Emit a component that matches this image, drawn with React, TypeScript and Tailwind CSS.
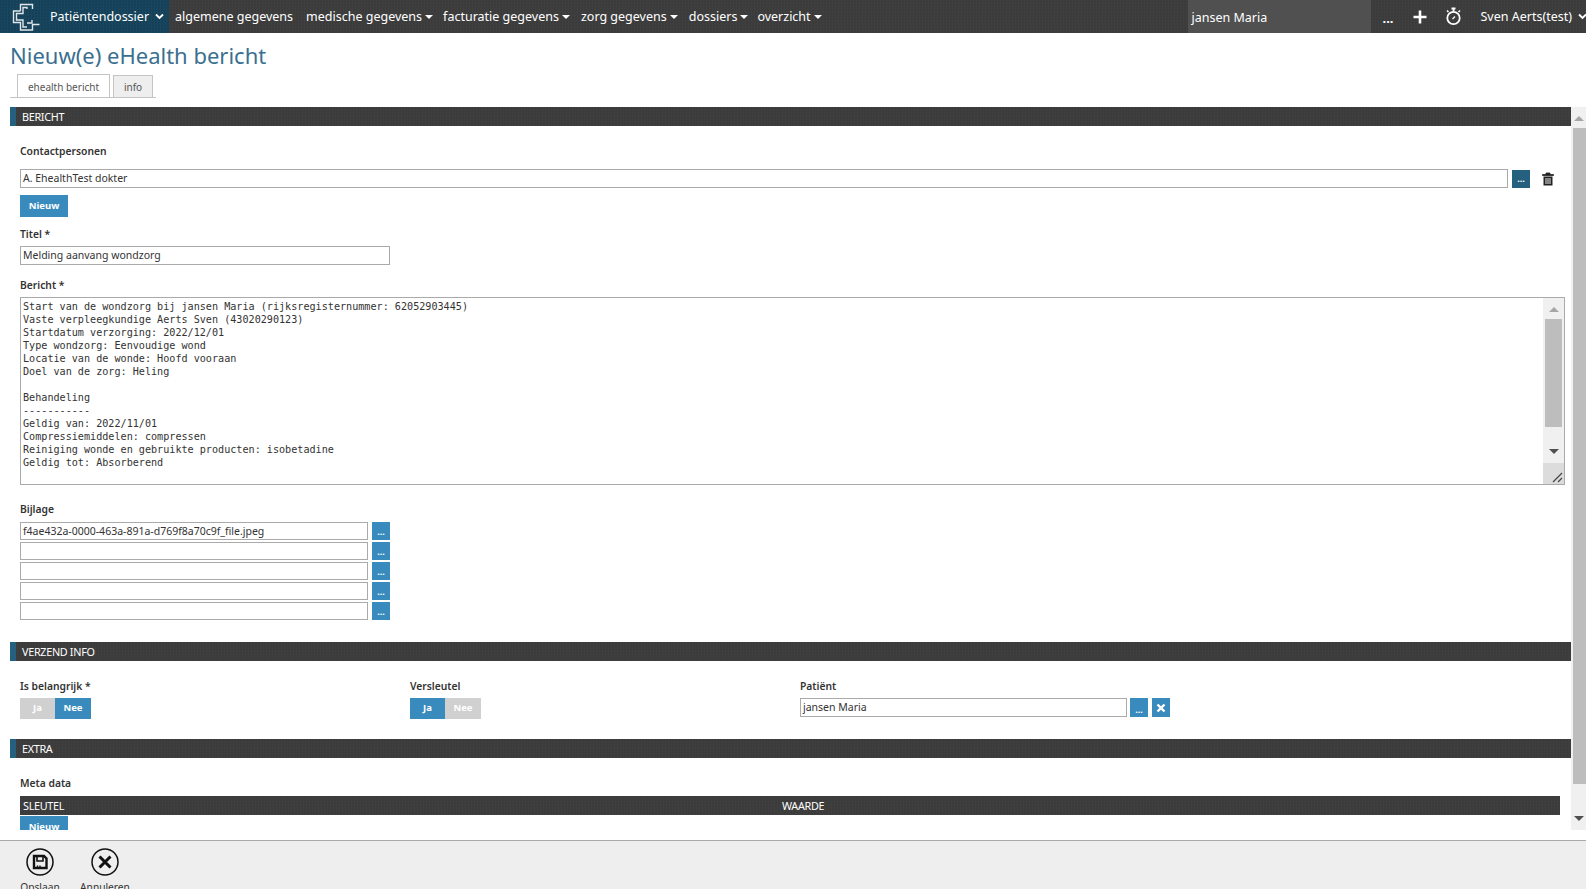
import React from "react";

const texture =
  "bg-[#3d3d3d] bg-[repeating-conic-gradient(#3f3f3f_0_25%,#3a3a3a_0_50%)] bg-[length:3px_3px]";

const messageLines = `Start van de wondzorg bij jansen Maria (rijksregisternummer: 62052903445)
Vaste verpleegkundige Aerts Sven (43020290123)
Startdatum verzorging: 2022/12/01
Type wondzorg: Eenvoudige wond
Locatie van de wonde: Hoofd vooraan
Doel van de zorg: Heling

Behandeling
-----------
Geldig van: 2022/11/01
Compressiemiddelen: compressen
Reiniging wonde en gebruikte producten: isobetadine
Geldig tot: Absorberend`;

function Caret() {
  return (
    <span className="ml-[3px] inline-block h-0 w-0 border-x-[4px] border-t-[4px] border-x-transparent border-t-white align-[2px]" />
  );
}

function Chevron() {
  return (
    <svg width="9" height="7" viewBox="0 0 9 7" className="ml-[6px] inline-block">
      <path d="M1 1.5 L4.5 5 L8 1.5" fill="none" stroke="#fff" strokeWidth="1.8" />
    </svg>
  );
}

function Logo() {
  return (
    <svg width="30" height="30" viewBox="0 0 30 30" fill="none" stroke="#dfe6ea" strokeWidth="1.4">
      <path d="M9.5 9 V2.5 H21.5 V7 M16 7 V5.5 H12 V11.5 H5.5 V18 H12 V25 H16" />
      <path d="M9.5 9 H2.5 V20.5 H9.5 V28 H21.5 V22.5 H28.5" />
      <path d="M16 21 H21 V18" />
    </svg>
  );
}

function Field({ children, className = "", h = "h-[19px]" }: { children?: React.ReactNode; className?: string; h?: string }) {
  return (
    <div
      className={`flex items-center overflow-hidden border border-[#aaaaaa] bg-white pt-[1px] pl-[2px] text-[10.5px] whitespace-nowrap text-[#333333] ${h} ${className}`}
    >
      {children}
    </div>
  );
}

function DotsBtn({ dark = false, className = "", h = "h-[18px]", pb = "pb-[5px]" }: { dark?: boolean; className?: string; h?: string; pb?: string }) {
  return (
    <div
      className={`flex w-[18px] shrink-0 items-end justify-center text-[9px] leading-[9px] font-bold text-white ${h} ${pb} ${dark ? "bg-[#25607f]" : "bg-[#3a8bbd]"} ${className}`}
    >
      ...
    </div>
  );
}

function SectionBar({ title, className = "" }: { title: string; className?: string }) {
  return (
    <div
      className={`flex h-[19px] items-center border-l-[6px] border-[#25607f] pt-[1px] pl-[6px] text-[10.8px] tracking-[-0.3px] text-white ${texture} ${className}`}
    >
      {title}
    </div>
  );
}

function Label({ children, className = "" }: { children: React.ReactNode; className?: string }) {
  return <div className={`h-[14px] text-[10.3px] leading-[14px] font-semibold text-[#333333] ${className}`}>{children}</div>;
}

function NewButton({ className = "" }: { className?: string }) {
  return (
    <div className={`flex h-[22px] w-[48px] shrink-0 items-center justify-center bg-[#3a8bbd] pt-[1px] text-[9.5px] font-bold text-white ${className}`}>
      Nieuw
    </div>
  );
}

function Toggle({ active }: { active: "Ja" | "Nee" }) {
  const cell = "flex h-[21px] items-center justify-center text-[9.5px] font-bold text-white";
  return (
    <div className="mt-[5px] flex">
      <div className={`${cell} w-[35px] ${active === "Ja" ? "bg-[#3a8bbd]" : "bg-[#d0d0d0]"}`}>Ja</div>
      <div className={`${cell} w-[36px] ${active === "Nee" ? "bg-[#3a8bbd]" : "bg-[#d0d0d0]"}`}>Nee</div>
    </div>
  );
}

function ArrowUp({ color = "#a6a6a6" }: { color?: string }) {
  return <span className="block h-0 w-0 border-x-[5px] border-b-[5px] border-x-transparent" style={{ borderBottomColor: color }} />;
}

function ArrowDown({ color = "#505050" }: { color?: string }) {
  return <span className="block h-0 w-0 border-x-[5px] border-t-[5px] border-x-transparent" style={{ borderTopColor: color }} />;
}

export default function App() {
  return (
    <div className="flex h-[889px] w-[1586px] flex-col overflow-hidden bg-white font-['Noto_Sans','Open_Sans',sans-serif] text-[#333333]">
      {/* top bar */}
      <header className={`flex h-[33px] shrink-0 items-center text-[12.5px] text-white ${texture}`}>
        <div className="flex h-full w-[169px] shrink-0 items-center bg-[#17445c] bg-[repeating-conic-gradient(#19475f_0_25%,#153f56_0_50%)] bg-[length:3px_3px] pl-[11px]">
          <Logo />
          <span className="ml-[9px] pt-[2px]">Patiëntendossier</span>
          <Chevron />
        </div>
        <nav className="flex items-center pt-[2px]">
          <span className="ml-[6px]">algemene gegevens</span>
          <span className="ml-[13px]">medische gegevens<Caret /></span>
          <span className="ml-[10px]">facturatie gegevens<Caret /></span>
          <span className="ml-[11px]">zorg gegevens<Caret /></span>
          <span className="ml-[11px]">dossiers<Caret /></span>
          <span className="ml-[9px]">overzicht<Caret /></span>
        </nav>
        <div className="ml-auto flex h-full items-center">
          <div className="flex h-full w-[183px] items-center bg-[#505050] pt-[4px] pl-[4px] text-[12.5px]">jansen Maria</div>
          <span className="ml-[12px] pt-[2px] text-[13px] leading-[22px] font-bold">...</span>
          <svg width="14" height="14" viewBox="0 0 14 14" className="ml-[20px]">
            <path d="M7 0.5 V13.5 M0.5 7 H13.5" stroke="#fff" strokeWidth="2.6" />
          </svg>
          <svg width="17" height="19" viewBox="0 0 17 19" fill="none" stroke="#fff" className="ml-[18px]">
            <circle cx="8.5" cy="11" r="6.2" strokeWidth="1.8" />
            <path d="M6.5 1.5 H10.5 M8.5 1.5 V4" strokeWidth="1.8" />
            <path d="M2 3.5 L3.5 5 M15 3.5 L13.5 5" strokeWidth="1.6" />
            <path d="M7.5 12 L10 9.5" strokeWidth="1.2" />
          </svg>
          <span className="ml-[18px] pt-[2px] whitespace-nowrap">Sven Aerts(test)</span>
          <span className="w-[14px] shrink-0 overflow-hidden"><Chevron /></span>
        </div>
      </header>

      {/* heading + tabs */}
      <h1 className="mt-[6px] ml-[10px] h-[30px] pt-[1px] text-[22px] leading-[30px] font-normal text-[#3a6f8f]">Nieuw(e) eHealth bericht</h1>
      <div className="mt-[6px] ml-[10px] flex h-[23px] w-[146px] items-end border-b border-[#c4c4c4] pl-[7px] text-[10px] text-[#555555]">
        <div className="flex h-[23px] w-[93px] items-center justify-center border-x border-t border-[#c4c4c4] bg-white pt-[2px]">ehealth bericht</div>
        <div className="ml-[3px] flex h-[22px] w-[40px] items-center justify-center border-x border-t border-[#c4c4c4] bg-[#eeeeee] pt-[1px]">info</div>
      </div>

      {/* main scroll area */}
      <div className="mt-[9px] flex h-[723px] shrink-0">
        <main className="ml-[10px] w-[1561px] overflow-hidden">
          <SectionBar title="BERICHT" />
          <div className="pr-[6px] pl-[10px]">
            <Label className="mt-[18px]">Contactpersonen</Label>
            <div className="mt-[11px] flex items-center">
              <Field className="w-[1488px]">A. EhealthTest dokter</Field>
              <DotsBtn dark className="ml-[4px]" />
              <svg width="12" height="14" viewBox="0 0 12 14" className="ml-[12px]">
                <path d="M0.5 2.5 H11.5 V3.5 H0.5 Z M4 2.5 V1 H8 V2.5" fill="#222" stroke="#222" strokeWidth="0.8" />
                <path d="M1.5 4.5 H10.5 V13.5 H1.5 Z" fill="#222" />
                <path d="M4 6 V12 M6 6 V12 M8 6 V12" stroke="#fff" strokeWidth="0.9" />
              </svg>
            </div>
            <NewButton className="mt-[7px]" />

            <Label className="mt-[10px]">Titel *</Label>
            <Field className="mt-[5px] w-[370px]">Melding aanvang wondzorg</Field>

            <Label className="mt-[13px]">Bericht *</Label>
            <div className="mt-[5px] flex h-[188px] w-[1545px] border border-[#aaaaaa]">
              <pre className="flex-1 overflow-hidden pt-[2px] pl-[2px] font-['DejaVu_Sans_Mono',monospace] text-[10.13px] leading-[13px] text-[#333333]">{messageLines}</pre>
              <div className="flex w-[21px] shrink-0 flex-col bg-[#f0f0f0]">
                <div className="flex h-[21px] shrink-0 items-center justify-center pt-[2px]"><ArrowUp /></div>
                <div className="mx-[2px] h-[108px] bg-[#bdbdbd]" />
                <div className="flex flex-1 items-center justify-center pt-[12px]"><ArrowDown /></div>
                <div className="flex h-[21px] shrink-0 items-end justify-end bg-[#dcdcdc] pr-[1px] pb-[1px]">
                  <svg width="11" height="11" viewBox="0 0 11 11" stroke="#444" strokeWidth="1.2">
                    <path d="M1 10 L10 1 M6 10 L10 6" />
                  </svg>
                </div>
              </div>
            </div>

            <Label className="mt-[17px]">Bijlage</Label>
            <div className="mt-[6px] flex w-[370px] flex-col gap-[2px]">
              {["f4ae432a-0000-463a-891a-d769f8a70c9f_file.jpeg", "", "", "", ""].map((v, i) => (
                <div key={i} className="flex items-center">
                  <Field h="h-[18px]" className="flex-1">{v}</Field>
                  <DotsBtn className="ml-[4px]" pb="pb-[4px]" />
                </div>
              ))}
            </div>
          </div>

          <SectionBar title="VERZEND INFO" className="mt-[22px]" />
          <div className="flex pr-[6px] pl-[10px]">
            <div className="w-[390px] pt-[18px]">
              <Label>Is belangrijk *</Label>
              <Toggle active="Nee" />
            </div>
            <div className="w-[390px] pt-[18px]">
              <Label>Versleutel</Label>
              <Toggle active="Ja" />
            </div>
            <div className="pt-[18px]">
              <Label>Patiënt</Label>
              <div className="mt-[5px] flex items-center">
                <Field className="w-[327px]">jansen Maria</Field>
                <DotsBtn className="ml-[3px]" h="h-[19px]" pb="pb-[3px]" />
                <div className="ml-[4px] flex h-[19px] w-[18px] items-center justify-center bg-[#3a8bbd]">
                  <svg width="10" height="10" viewBox="0 0 10 10">
                    <path d="M1.5 1.5 L8.5 8.5 M8.5 1.5 L1.5 8.5" stroke="#fff" strokeWidth="2.4" />
                  </svg>
                </div>
              </div>
            </div>
          </div>

          <SectionBar title="EXTRA" className="mt-[20px]" />
          <div className="pr-[11px] pl-[10px]">
            <Label className="mt-[18px]">Meta data</Label>
            <div className={`mt-[6px] flex h-[19px] items-center pt-[1px] text-[10.8px] tracking-[-0.3px] text-white ${texture}`}>
              <span className="w-[762px] pl-[3px]">SLEUTEL</span>
              <span>WAARDE</span>
            </div>
            <NewButton className="mt-[1px]" />
          </div>
        </main>

        {/* page scrollbar */}
        <div className="ml-auto flex w-[15px] shrink-0 flex-col bg-[#f0f0f0]">
          <div className="flex h-[21px] shrink-0 items-center justify-center pt-[2px]"><ArrowUp /></div>
          <div className="ml-[2px] h-[656px] bg-[#bdbdbd]" />
          <div className="flex flex-1 items-end justify-center pb-[9px]"><ArrowDown /></div>
        </div>
      </div>

      {/* footer */}
      <footer className="mt-[10px] flex flex-1 gap-[22px] overflow-hidden border-t border-[#aaaaaa] bg-[#eeeeee] pl-[21px] text-[10.2px] text-[#333333]">
        <div className="flex w-[38px] flex-col items-center pt-[7px]">
          <svg width="28" height="28" viewBox="0 0 28 28" fill="none" stroke="#111" className="shrink-0">
            <circle cx="14" cy="14" r="13" strokeWidth="1.5" />
            <path d="M8 8 H18 L20.5 10.5 V20 H8 Z" fill="none" strokeWidth="2.4" />
            <path d="M11 9 V13 H17 V9" strokeWidth="1.6" />
            <path d="M11.5 20 V17.5 M14 20 V17.5" strokeWidth="1.4" />
          </svg>
          <span className="mt-[4px] shrink-0 whitespace-nowrap">Opslaan</span>
        </div>
        <div className="flex w-[48px] flex-col items-center pt-[7px]">
          <svg width="28" height="28" viewBox="0 0 28 28" fill="none" stroke="#111" className="shrink-0">
            <circle cx="14" cy="14" r="13" strokeWidth="1.5" />
            <path d="M8.5 8.5 L19.5 19.5 M19.5 8.5 L8.5 19.5" strokeWidth="3" />
          </svg>
          <span className="mt-[4px] shrink-0 whitespace-nowrap">Annuleren</span>
        </div>
      </footer>
    </div>
  );
}
